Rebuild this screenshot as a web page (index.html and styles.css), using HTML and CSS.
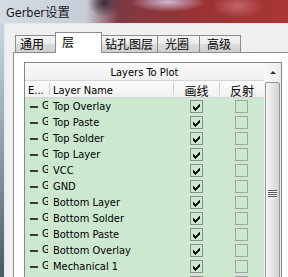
FILE: index.html
```html
<!DOCTYPE html>
<html lang="zh">
  <head>
    <meta charset="UTF-8" />
    <title>Gerber设置</title>
    <link rel="stylesheet" href="styles.css">
  </head>
  <body>
    <div class="titlebar">Gerber设置</div>
    <div class="frame">
      <div class="edge"></div>
      <div class="client">
        <div class="tabs">
          <div class="tab tab-general">通用</div>
          <div class="tab tab-layers active">层</div>
          <div class="tab tab-drill">钻孔图层</div>
          <div class="tab tab-aperture">光圈</div>
          <div class="tab tab-advanced">高级</div>
        </div>
        <div class="page">
          <div class="grid">
            <div class="table">
              <div class="caption">Layers To Plot</div>
              <div class="row head">
                <div class="c-ext">E...</div>
                <div class="c-name">Layer Name</div>
                <div class="c-plot">画线</div>
                <div class="c-mirror">反射</div>
              </div>
              <div id="layers"></div>
            </div>
            <div class="scrollbar">
              <div class="sb-up"><span class="arrow"></span></div>
              <div class="sb-thumb"><span class="grip"></span></div>
            </div>
          </div>
        </div>
      </div>
    </div>

    <script>
      // last entry is the half-visible row at the bottom edge
      const layers = [
        "Top Overlay", "Top Paste", "Top Solder", "Top Layer", "VCC", "GND",
        "Bottom Layer", "Bottom Solder", "Bottom Paste", "Bottom Overlay",
        "Mechanical 1", ""
      ];
      const tick =
        '<svg width="11" height="11" viewBox="0 0 11 11"><path d="M2 5h1v1h1v1h1V6h1V5h1V4h1V3h1v3H8v1H7v1H6v1H5v1H4V9H3V8H2z" fill="#111"/></svg>';
      let html = "";
      for (const name of layers) {
        const ext = name ? '<span class="swatch"></span>G' : "";
        html += `<div class="row layer">
          <div class="c-ext">${ext}</div>
          <div class="c-name">${name}</div>
          <div class="c-plot"><span class="check on">${tick}</span></div>
          <div class="c-mirror"><span class="check"></span></div>
        </div>`;
      }
      document.getElementById("layers").innerHTML = html;
    </script>
  </body>
</html>
```

FILE: styles.css
```css
body {
  margin: 0;
  width: 288px;
  height: 277px;
  overflow: hidden;
  font-family: "DejaVu Sans Condensed", "DejaVu Sans", "Noto Sans CJK SC", sans-serif;
  font-stretch: condensed;
  font-size: 11px;
  color: #000;
  background: #f0f0f0;
}
.titlebar {
  height: 23px;
  display: flex;
  align-items: center;
  padding-left: 6px;
  font-size: 12.5px;
  color: #1a1a1a;
  background:
    radial-gradient(ellipse 38px 10px at 168px 2px, rgba(214, 196, 226, 0.9), transparent),
    radial-gradient(ellipse 26px 12px at 238px 6px, rgba(206, 120, 130, 0.7), transparent),
    radial-gradient(ellipse 16px 14px at 104px 3px, rgba(40, 30, 40, 0.85), transparent),
    linear-gradient(to right, #d3dbe3 0, #c6ced8 86px, #7c3a44 118px, #9c3232 200px, #a83636 288px);
}
.frame {
  display: flex;
  height: 254px;
}
.edge {
  width: 4px;
  background: linear-gradient(to bottom, #cdd6e0, #8896a6 55%, #4e5864);
}
.client {
  flex: 1;
  border-left: 1px solid #e2e8ee;
  border-top: 1px solid #e2e8ee;
  padding: 9px 0 0 8px;
  overflow: hidden;
}
.tabs {
  display: flex;
  align-items: flex-end;
  height: 19px;
  padding-left: 2px;
  font-family: "Noto Sans CJK SC", sans-serif;
  font-size: 12px;
}
.tab {
  box-sizing: border-box;
  height: 17px;
  line-height: 16px;
  border: 1px solid #898c95;
  border-bottom: none;
  background: linear-gradient(to bottom, #f3f3f3, #ebebeb 50%, #dddddd 51%, #cfcfcf);
  white-space: nowrap;
}
.tab-general { width: 42px; padding-left: 4px; }
.tab-layers { width: 47px; padding-left: 6px; }
.tab-drill { width: 58px; padding-left: 4px; }
.tab-aperture { width: 43px; padding-left: 7px; margin-left: -1px; }
.tab-advanced { width: 42px; padding-left: 7px; margin-left: -1px; }
.tab.active {
  position: relative;
  z-index: 1;
  height: 21px;
  line-height: 18px;
  margin: 0 -2px -1px;
  background: #fff;
}
.page {
  width: 290px;
  height: 240px;
  border-left: 1px solid #898c95;
  border-top: 1px solid #898c95;
  background: #fff;
  padding: 9px 0 0 10px;
}
.grid {
  display: flex;
  width: 256px;
  height: 220px;
  border: 1px solid #828790;
  border-bottom: none;
}
.table {
  width: 239px;
  background: #cce8cf;
}
.caption {
  height: 17px;
  line-height: 19px;
  text-align: center;
  background: linear-gradient(to bottom, #fafafa, #f0f0f0);
  border-bottom: 1px solid #d5d5d5;
}
.row {
  display: flex;
  height: 16px;
  line-height: 18px;
}
.head {
  height: 16px;
  background: linear-gradient(to bottom, #fafafa, #f1f1f1);
  border-bottom: 1px solid #d5d5d5;
  align-items: center;
}
.head > div {
  height: 12px;
  line-height: 15px;
}
.head .c-ext {
  overflow: visible;
}
.head .c-name,
.head .c-plot,
.head .c-mirror {
  border-left: 1px solid #d0d0d0;
}
.head .c-name { padding-left: 3px; }
.head .c-plot,
.head .c-mirror {
  font-family: "Noto Sans CJK SC", sans-serif;
  font-size: 12px;
  text-align: center;
}
.c-ext {
  box-sizing: border-box;
  width: 24px;
  padding-left: 3px;
  overflow: hidden;
  white-space: nowrap;
}
.c-name {
  box-sizing: border-box;
  width: 124px;
  padding-left: 4px;
  white-space: nowrap;
}
.c-plot {
  box-sizing: border-box;
  width: 46px;
  display: flex;
  justify-content: center;
}
.c-mirror {
  box-sizing: border-box;
  flex: 1;
  display: flex;
  justify-content: center;
}
.layer .c-ext {
  display: flex;
  align-items: center;
  padding-left: 5px;
  clip-path: inset(0 1px 0 0);
}
.swatch {
  display: inline-block;
  flex: none;
  width: 8px;
  height: 2px;
  margin: 1px 4px 0 0;
  background: #3a3a3a;
}
.check {
  box-sizing: border-box;
  width: 13px;
  height: 13px;
  margin-top: 2px;
  border: 1px solid #a2a2a2;
}
.check.on {
  border-color: #8e8e8e;
}
.check svg {
  display: block;
}
.scrollbar {
  width: 17px;
  display: flex;
  flex-direction: column;
  background: #f0f0f0;
}
.sb-up {
  height: 18px;
  display: flex;
  align-items: center;
  justify-content: center;
  background: linear-gradient(to right, #f7f7f7, #ececec);
}
.arrow {
  width: 0;
  height: 0;
  border-left: 3px solid transparent;
  border-right: 3px solid transparent;
  border-bottom: 3px solid #333;
}
.sb-thumb {
  flex: 1;
  margin: 1px 1px 0;
  border: 1px solid #979797;
  border-radius: 2px;
  background: linear-gradient(to right, #f5f5f5, #e6e6e6 50%, #d2d2d2);
  display: flex;
  justify-content: center;
  padding-top: 107px;
}
.grip {
  width: 9px;
  height: 8px;
  background: repeating-linear-gradient(to bottom, #5a5a5a 0 1px, #f4f4f4 1px 2px);
}
```
